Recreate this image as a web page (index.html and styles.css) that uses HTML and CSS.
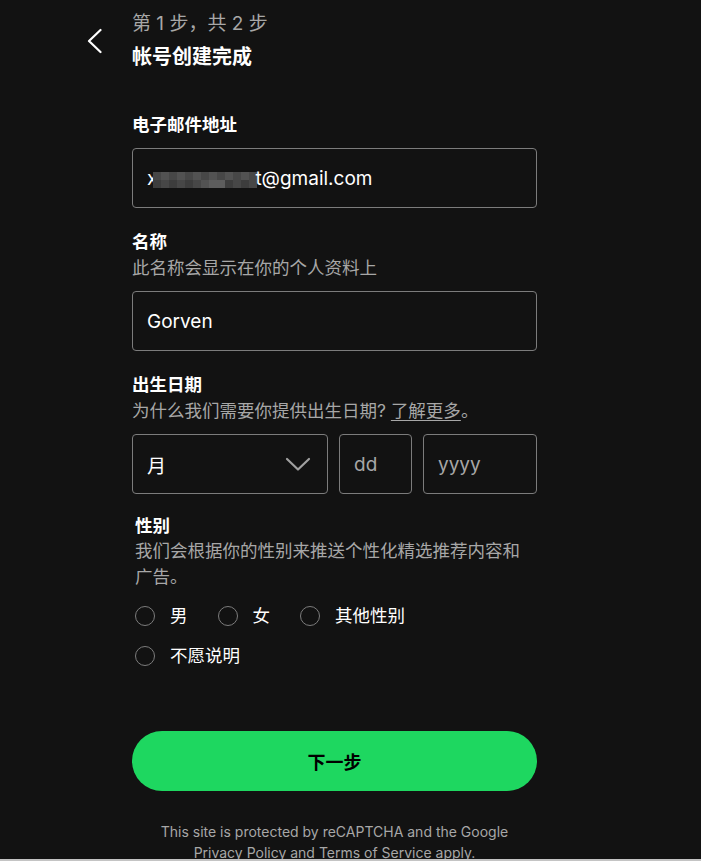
FILE: index.html
```html
<!DOCTYPE html>
<html lang="zh-CN">
<head>
  <meta charset="UTF-8" />
  <meta name="viewport" content="width=device-width, initial-scale=1.0" />
  <title>注册</title>
  <link rel="stylesheet" href="styles.css">
</head>
<body>

  <div class="signup-page">
    <button class="back-btn" aria-label="返回">
      <svg width="16" height="26" viewBox="0 0 16 26">
        <path d="M14.5 2 L3 13 L14.5 24" fill="none" stroke="#fff" stroke-width="2.2" stroke-linecap="round" stroke-linejoin="round"/>
      </svg>
    </button>

    <div class="signup-form">
      <div class="step-head">
        <div class="step-count">第 1 步，共 2 步</div>
        <h1 class="step-title">帐号创建完成</h1>
      </div>

      <div class="field">
        <label class="field-label">电子邮件地址</label>
        <div class="text-box email-box">x<span class="mosaic">
            <i class="m2"></i><i class="m3"></i><i class="m2"></i><i class="m3"></i><i class="m2"></i><i class="m3"></i><i class="m2"></i><i class="m3"></i><i class="m2"></i><i class="m3"></i><i class="m2"></i><i class="m3"></i><i class="m2"></i>
            <i class="m1"></i><i class="m2"></i><i class="m1"></i><i class="m2"></i><i class="m1"></i><i class="m2"></i><i class="m3"></i><i class="m4"></i><i class="m4"></i><i class="m1"></i><i class="m2"></i><i class="m1"></i><i class="m2"></i>
          </span>t@gmail.com</div>
      </div>

      <div class="field">
        <label class="field-label">名称</label>
        <p class="field-hint">此名称会显示在你的个人资料上</p>
        <div class="text-box">Gorven</div>
      </div>

      <div class="field">
        <label class="field-label">出生日期</label>
        <p class="field-hint">为什么我们需要你提供出生日期? <a href="#" class="hint-link">了解更多</a>。</p>
        <div class="date-row">
          <div class="text-box select-box">
            <span>月</span>
            <svg width="26" height="16" viewBox="0 0 26 16">
              <path d="M2 3 L13 13.5 L24 3" fill="none" stroke="#a0a0a0" stroke-width="2.2" stroke-linecap="round" stroke-linejoin="round"/>
            </svg>
          </div>
          <div class="text-box placeholder">dd</div>
          <div class="text-box placeholder">yyyy</div>
        </div>
      </div>

      <div class="field gender">
        <label class="field-label">性别</label>
        <p class="field-hint">我们会根据你的性别来推送个性化精选推荐内容和广告。</p>
        <div class="radio-list">
          <label class="radio"><span class="radio-dot"></span>男</label>
          <label class="radio"><span class="radio-dot"></span>女</label>
          <label class="radio"><span class="radio-dot"></span>其他性别</label>
          <label class="radio"><span class="radio-dot"></span>不愿说明</label>
        </div>
      </div>

      <button class="next-btn">下一步</button>

      <p class="legal">This site is protected by reCAPTCHA and the Google<br>
        <a href="#">Privacy Policy</a> and <a href="#">Terms of Service</a> apply.</p>
    </div>
  </div>

  <div class="window-edge"></div>

</body>
</html>
```

FILE: styles.css
```css
body {
  font-family: Inter, "Noto Sans CJK SC", sans-serif;
  background-color: #121212;
  color: #fff;
  margin: 0;
  padding: 0;
}

.signup-page {
  display: flex;
  padding-left: 84px;
}

.back-btn {
  width: 48px;
  height: 40px;
  margin-top: 28px;
  padding: 0 0 0 2px;
  background: none;
  border: none;
  display: flex;
  align-items: flex-start;
  cursor: pointer;
}

.signup-form {
  width: 405px;
}

.step-head {
  padding-top: 11px;
}

.step-count {
  color: #a7a7a7;
  font-size: 19px;
  line-height: 26px;
}

.step-title {
  margin: 7px 0 0;
  font-size: 20px;
  line-height: 26px;
  font-weight: 700;
}

.field {
  margin-top: 21px;
}

.step-head + .field {
  margin-top: 42px;
}

.field-label {
  display: block;
  font-size: 17.5px;
  line-height: 26px;
  font-weight: 700;
}

.field-hint {
  margin: 0;
  color: #a7a7a7;
  font-size: 17.5px;
  line-height: 26px;
}

.hint-link {
  color: #a7a7a7;
  text-decoration: underline;
  text-underline-offset: 3px;
}

.text-box {
  box-sizing: border-box;
  height: 60px;
  margin-top: 10px;
  padding: 0 14px;
  border: 1px solid #7c7c7c;
  border-radius: 4px;
  display: flex;
  align-items: center;
  font-size: 19px;
  color: #fff;
}

.mosaic {
  display: inline-grid;
  grid-template-columns: repeat(13, 8px);
  grid-template-rows: 8px 8px;
  margin: 0 -2px -4px -4px;
}

.mosaic i { display: block; }
.mosaic .m1 { background-color: #3d3d3d; }
.mosaic .m2 { background-color: #474747; }
.mosaic .m3 { background-color: #525252; }
.mosaic .m4 { background-color: #5d5d5d; }

.date-row {
  display: grid;
  grid-template-columns: 196px 73px 1fr;
  gap: 11px;
  margin-top: 10px;
}

.date-row .text-box {
  margin-top: 0;
}

.select-box {
  justify-content: space-between;
  padding-right: 16px;
}

.placeholder {
  color: #a7a7a7;
}

.gender {
  margin-top: 20px;
  padding-left: 3px;
}

.gender .field-label {
  line-height: 24px;
}

.radio-list {
  display: flex;
  flex-wrap: wrap;
  column-gap: 30px;
  row-gap: 20px;
  margin-top: 16px;
}

.radio {
  display: flex;
  align-items: center;
  gap: 15px;
  font-size: 17.5px;
  line-height: 20px;
}

.radio-dot {
  box-sizing: border-box;
  width: 20px;
  height: 20px;
  border: 1.5px solid #7c7c7c;
  border-radius: 50%;
}

.next-btn {
  display: block;
  width: 100%;
  height: 60px;
  margin-top: 65px;
  border: none;
  border-radius: 30px;
  background-color: #1ed760;
  color: #000;
  font-family: inherit;
  font-size: 18px;
  font-weight: 700;
  cursor: pointer;
}

.legal {
  margin: 30px 0 0;
  text-align: center;
  color: #a7a7a7;
  font-size: 14px;
  line-height: 21px;
}

.legal a {
  color: #a7a7a7;
  text-decoration: underline;
}

.window-edge {
  position: fixed;
  left: 0;
  right: 0;
  bottom: 0;
  height: 2px;
  background-color: #c4c4c4;
}
```
